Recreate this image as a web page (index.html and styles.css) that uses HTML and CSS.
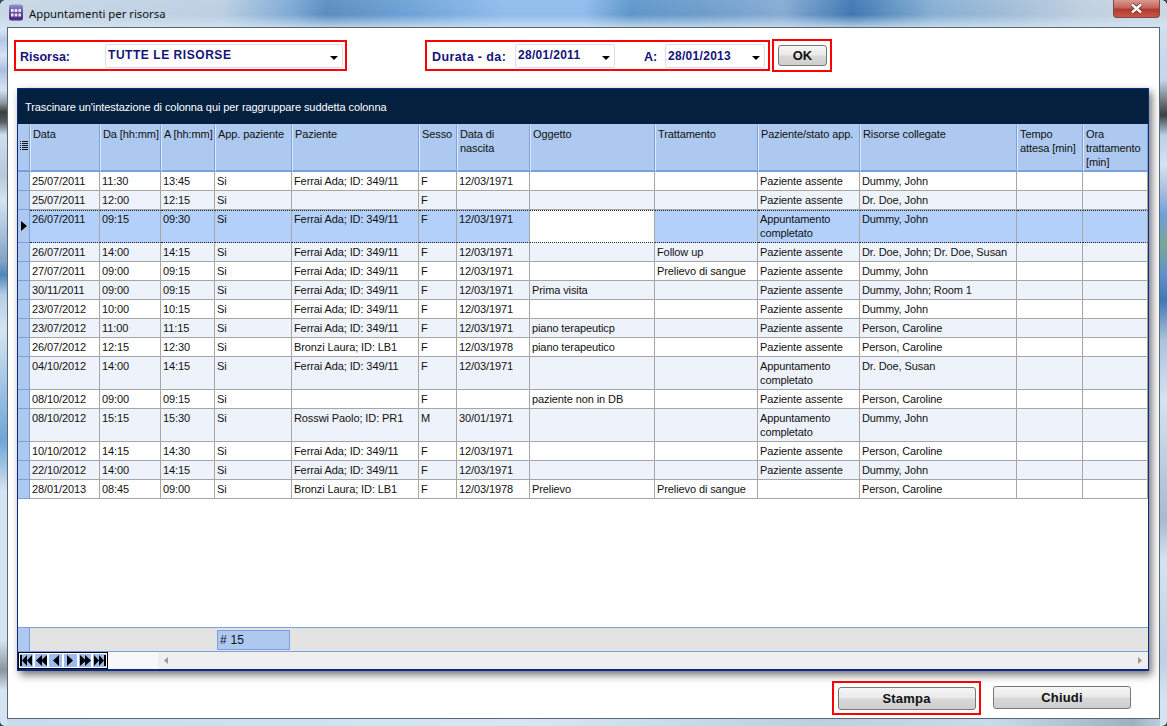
FILE: index.html
```html
<!DOCTYPE html>
<html lang="it">
<head>
<meta charset="utf-8">
<title>Appuntamenti per risorsa</title>
<link rel="stylesheet" href="styles.css">
</head>
<body>
<div class="window">
  <header class="titlebar">
    <svg class="appicon" width="16" height="17" viewBox="0 0 16 17"><defs><linearGradient id="ig" x1="0" y1="0" x2="0" y2="1"><stop offset="0" stop-color="#8f96cc"/><stop offset=".45" stop-color="#6a4f9e"/><stop offset="1" stop-color="#43277a"/></linearGradient></defs><rect x="1" y="0.5" width="14" height="16" rx="2.5" fill="url(#ig)"/><g fill="#e9e4f5"><rect x="3" y="5" width="2.6" height="3"/><rect x="6.7" y="5" width="2.6" height="3"/><rect x="10.4" y="5" width="2.6" height="3"/><rect x="3" y="9.5" width="2.6" height="3"/><rect x="6.7" y="9.5" width="2.6" height="3"/><rect x="10.4" y="9.5" width="2.6" height="3"/></g></svg>
    <span class="wintitle">Appuntamenti per risorsa</span>
    <div class="closebtn"><svg width="13" height="11" viewBox="0 0 13 11"><path d="M2 1.5 L11 9.5 M11 1.5 L2 9.5" stroke="#5a2a2a" stroke-width="4"/><path d="M2 1.5 L11 9.5 M11 1.5 L2 9.5" stroke="#fff" stroke-width="2.4"/></svg></div>
  </header>
  <main class="client">
    <div class="toolbar">
      <div class="redbox box-risorsa">
        <label class="lbl lbl-risorsa">Risorsa:</label>
        <div class="combo combo-wide"><span>TUTTE LE RISORSE</span><i class="caret"></i></div>
      </div>
      <div class="redbox box-durata">
        <label class="lbl lbl-da">Durata - da:</label>
        <div class="combo combo-date"><span>28/01/2011</span><i class="caret"></i></div>
        <label class="lbl lbl-a">A:</label>
        <div class="combo combo-date combo-low"><span>28/01/2013</span><i class="caret"></i></div>
      </div>
      <div class="redbox box-ok"><button class="btn btn-ok">OK</button></div>
    </div>
    <section class="grid">
      <div class="groupband">Trascinare un'intestazione di colonna qui per raggruppare suddetta colonna</div>
      <div class="tablewrap">
        <table class="data">
          <colgroup><col class="c0"><col class="c1"><col class="c2"><col class="c3"><col class="c4"><col class="c5"><col class="c6"><col class="c7"><col class="c8"><col class="c9"><col class="c10"><col class="c11"><col class="c12"><col class="c13"></colgroup>
          <thead>
            <tr><th class="sel-h"><svg width="8" height="9" viewBox="0 0 8 9"><path d="M0 0h1v1H0zM0 2h1v1H0zM0 4h1v1H0zM0 6h1v1H0zM0 8h1v1H0zM2 0h6v1H2zM2 2h6v1H2zM2 4h6v1H2zM2 6h6v1H2zM2 8h6v1H2z" fill="#111"/></svg></th><th>Data</th><th class="nowrap">Da [hh:mm]</th><th class="nowrap">A [hh:mm]</th><th class="nowrap">App. paziente</th><th>Paziente</th><th>Sesso</th><th>Data di nascita</th><th>Oggetto</th><th>Trattamento</th><th class="nowrap">Paziente/stato app.</th><th>Risorse collegate</th><th>Tempo attesa [min]</th><th>Ora trattamento [min]</th></tr>
          </thead>
          <tbody>
            <tr><th></th><td>25/07/2011</td><td>11:30</td><td>13:45</td><td>Si</td><td>Ferrai Ada; ID: 349/11</td><td>F</td><td>12/03/1971</td><td></td><td></td><td>Paziente assente</td><td>Dummy, John</td><td></td><td></td></tr>
            <tr class="alt"><th></th><td>25/07/2011</td><td>12:00</td><td>12:15</td><td>Si</td><td></td><td>F</td><td></td><td></td><td></td><td>Paziente assente</td><td>Dr. Doe, John</td><td></td><td></td></tr>
            <tr class="tall current"><th><svg width="6" height="10" viewBox="0 0 6 10"><path d="M0 0 L6 5 L0 10Z" fill="#000"/></svg></th><td>26/07/2011</td><td>09:15</td><td>09:30</td><td>Si</td><td>Ferrai Ada; ID: 349/11</td><td>F</td><td>12/03/1971</td><td class="editing"></td><td></td><td>Appuntamento completato</td><td>Dummy, John</td><td></td><td></td></tr>
            <tr class="alt"><th></th><td>26/07/2011</td><td>14:00</td><td>14:15</td><td>Si</td><td>Ferrai Ada; ID: 349/11</td><td>F</td><td>12/03/1971</td><td></td><td>Follow up</td><td>Paziente assente</td><td>Dr. Doe, John; Dr. Doe, Susan</td><td></td><td></td></tr>
            <tr><th></th><td>27/07/2011</td><td>09:00</td><td>09:15</td><td>Si</td><td>Ferrai Ada; ID: 349/11</td><td>F</td><td>12/03/1971</td><td></td><td>Prelievo di sangue</td><td>Paziente assente</td><td>Dummy, John</td><td></td><td></td></tr>
            <tr class="alt"><th></th><td>30/11/2011</td><td>09:00</td><td>09:15</td><td>Si</td><td>Ferrai Ada; ID: 349/11</td><td>F</td><td>12/03/1971</td><td>Prima visita</td><td></td><td>Paziente assente</td><td>Dummy, John; Room 1</td><td></td><td></td></tr>
            <tr><th></th><td>23/07/2012</td><td>10:00</td><td>10:15</td><td>Si</td><td>Ferrai Ada; ID: 349/11</td><td>F</td><td>12/03/1971</td><td></td><td></td><td>Paziente assente</td><td>Dummy, John</td><td></td><td></td></tr>
            <tr class="alt"><th></th><td>23/07/2012</td><td>11:00</td><td>11:15</td><td>Si</td><td>Ferrai Ada; ID: 349/11</td><td>F</td><td>12/03/1971</td><td>piano terapeuticp</td><td></td><td>Paziente assente</td><td>Person, Caroline</td><td></td><td></td></tr>
            <tr><th></th><td>26/07/2012</td><td>12:15</td><td>12:30</td><td>Si</td><td>Bronzi Laura; ID: LB1</td><td>F</td><td>12/03/1978</td><td>piano terapeutico</td><td></td><td>Paziente assente</td><td>Person, Caroline</td><td></td><td></td></tr>
            <tr class="alt tall"><th></th><td>04/10/2012</td><td>14:00</td><td>14:15</td><td>Si</td><td>Ferrai Ada; ID: 349/11</td><td>F</td><td>12/03/1971</td><td></td><td></td><td>Appuntamento completato</td><td>Dr. Doe, Susan</td><td></td><td></td></tr>
            <tr><th></th><td>08/10/2012</td><td>09:00</td><td>09:15</td><td>Si</td><td></td><td>F</td><td></td><td>paziente non in DB</td><td></td><td>Paziente assente</td><td>Person, Caroline</td><td></td><td></td></tr>
            <tr class="alt tall"><th></th><td>08/10/2012</td><td>15:15</td><td>15:30</td><td>Si</td><td>Rosswi Paolo; ID: PR1</td><td>M</td><td>30/01/1971</td><td></td><td></td><td>Appuntamento completato</td><td>Dummy, John</td><td></td><td></td></tr>
            <tr><th></th><td>10/10/2012</td><td>14:15</td><td>14:30</td><td>Si</td><td>Ferrai Ada; ID: 349/11</td><td>F</td><td>12/03/1971</td><td></td><td></td><td>Paziente assente</td><td>Person, Caroline</td><td></td><td></td></tr>
            <tr class="alt"><th></th><td>22/10/2012</td><td>14:00</td><td>14:15</td><td>Si</td><td>Ferrai Ada; ID: 349/11</td><td>F</td><td>12/03/1971</td><td></td><td></td><td>Paziente assente</td><td>Dummy, John</td><td></td><td></td></tr>
            <tr><th></th><td>28/01/2013</td><td>08:45</td><td>09:00</td><td>Si</td><td>Bronzi Laura; ID: LB1</td><td>F</td><td>12/03/1978</td><td>Prelievo</td><td>Prelievo di sangue</td><td></td><td>Person, Caroline</td><td></td><td></td></tr>
          </tbody>
        </table>
      </div>
      <div class="summary"><div class="sum-sel"></div><div class="sum-count"># 15</div></div>
      <div class="navbar">
        <div class="navbtns">
          <span class="nb"><svg width="12" height="11" viewBox="0 0 12 11"><path d="M0 0h2v11H0zM7 0v11L2 5.5zM12 0v11L7 5.5z"/></svg></span>
          <span class="nb"><svg width="11" height="11" viewBox="0 0 11 11"><path d="M6 0v11L0 5.5zM11 0v11L5 5.5z"/></svg></span>
          <span class="nb"><svg width="6" height="11" viewBox="0 0 6 11"><path d="M6 0v11L0 5.5z"/></svg></span>
          <span class="nb"><svg width="6" height="11" viewBox="0 0 6 11"><path d="M0 0v11L6 5.5z"/></svg></span>
          <span class="nb"><svg width="11" height="11" viewBox="0 0 11 11"><path d="M0 0v11L6 5.5zM5 0v11L11 5.5z"/></svg></span>
          <span class="nb"><svg width="12" height="11" viewBox="0 0 12 11"><path d="M0 0v11L5 5.5zM5 0v11L10 5.5zM10 0h2v11h-2z"/></svg></span>
        </div>
        <div class="hscroll">
          <svg width="4" height="7" viewBox="0 0 4 7"><path d="M4 0v7L0 3.5z" fill="#999"/></svg>
          <svg width="4" height="7" viewBox="0 0 4 7"><path d="M0 0v7L4 3.5z" fill="#999"/></svg>
        </div>
      </div>
    </section>
    <footer class="actions">
      <div class="redbox box-stampa"><button class="btn btn-big">Stampa</button></div>
      <button class="btn btn-big">Chiudi</button>
    </footer>
  </main>
</div>
</body>
</html>
```
FILE: styles.css
```css
* { box-sizing: border-box; }
html, body { margin: 0; padding: 0; height: 100%; overflow: hidden; }
body { font-family: "Liberation Sans", Arial, sans-serif; background: #39444f; }
.window {
  width: 1167px; height: 726px; display: flex; flex-direction: column;
  border-radius: 6px 6px 5px 5px;
  background-color: #cfe0f0;
  background-image:
    linear-gradient(180deg, #d5e4f2 0, #d5e4f2 30px, #b4c8e6 40px, #d5e4f2 55px, #aebfe2 70px, #d5e4f2 90px, #8f979f 103px, #3d3d3d 112px, #585d62 122px, #cfe0f0 135px, #b8c8d8 175px, #d5e4f2 200px, #7fa2c6 262px, #4e86bd 275px, #b5cfe6 295px, #d5e4f2 330px, #6fa5d8 440px, #a8c8e6 470px, #d5e4f2 490px, #d5e4f2 640px, #8c949c 670px, #d5e4f2 690px),
    linear-gradient(180deg, #d5e4f2 0, #c2d6ea 80px, #6a7176 103px, #3a3f44 115px, #b8d0e8 135px, #d5e4f2 165px, #a8c0e2 190px, #6f9fd8 215px, #78a898 245px, #5d92d0 275px, #3f78ba 300px, #a9c4de 340px, #d5e4f2 400px, #a6bbcf 520px, #d5e4f2 560px, #bcd2e4 660px, #d5e4f2 700px),
    linear-gradient(90deg, #c6dcee 0, #d7e6f3 45%, #bcd0e2 70%, #c9dbea 85%, #9fb0c0 97%, #c0d4e6 100%);
  background-size: 7px 100%, 7px 100%, 100% 100%;
  background-position: left top, right top, left top;
  background-repeat: no-repeat;
}
.titlebar {
  height: 27px; flex: none; display: flex; align-items: flex-start; padding-left: 8px; position: relative;
  border-radius: 6px 6px 0 0;
  background:
    linear-gradient(180deg, rgba(255,255,255,.05) 0, rgba(255,255,255,0) 55%, rgba(214,230,244,.75) 100%),
    linear-gradient(90deg, #c8d8e6 0, #bccfe2 19%, #7da9d5 25%, #5a8dc0 28%, #6ea2d6 35%, #8fbcec 43%, #8fbcec 50%, #5f97cb 54%, #6d9dcb 60%, #86acd4 67%, #3f78b2 73%, #86b0d4 80%, #a0bcd8 86%, #c0d0e0 93%, #cad8e4 100%);
}
.appicon { margin-top: 4px; }
.wintitle { font-family: "Noto Sans", sans-serif; font-size: 11.3px; line-height: 16px; margin: 6px 0 0 5px; color: #111; }
.closebtn {
  position: absolute; right: 7px; top: 0; width: 47px; height: 18px;
  border: 1px solid #7a4a48; border-top: 0; border-radius: 0 0 4px 4px;
  background: linear-gradient(#d99a90 0%, #c4645a 45%, #b03a2e 55%, #c9564a 100%);
  display: flex; align-items: center; justify-content: center;
}
.client {
  flex: none; width: 1153px; height: 692px; margin-left: 7px;
  background: #fff; border: 1px solid #5a6670;
  display: flex; flex-direction: column;
}
.toolbar { height: 60px; flex: none; display: flex; padding: 11px 0 0 6px; align-items: flex-start; }
.redbox { border: 2px solid #f00; display: flex; align-items: center; background: #fff; }
.box-risorsa { width: 333px; height: 31px; margin-top: 1px; padding-left: 4px; }
.box-durata { width: 345px; height: 31px; margin: 1px 0 0 78px; padding-left: 5px; }
.box-ok { width: 60px; height: 33px; margin-left: 2px; padding-left: 4px; }
.lbl { font-size: 12.5px; font-weight: bold; color: #14147a; line-height: 16px; padding-top: 2px; }
.lbl-risorsa { width: 85px; }
.lbl-da { width: 83px; letter-spacing: .4px; }
.lbl-a { width: 21px; margin-left: 29px; }
.combo {
  height: 24px; border: 1px solid #d9dfe8; border-radius: 2px; position: relative;
  font-size: 12px; font-weight: bold; color: #14147a; padding: 2px 0 0 2px; line-height: 16px;
}
.combo-wide { width: 238px; letter-spacing: .55px; }
.combo-date { width: 100px; letter-spacing: .3px; }
.combo-low { padding-top: 3px; }
.caret { position: absolute; right: 4px; top: 11px; width: 0; height: 0; border: 4px solid transparent; border-top: 4px solid #000; border-bottom: 0; }
.btn {
  font-family: "Liberation Sans", Arial, sans-serif; font-weight: bold; color: #111; padding: 0;
  border: 1px solid #777; border-radius: 3px;
  background: linear-gradient(#f6f6f6 0%, #e9e9e9 48%, #d8d8d8 52%, #cfcfcf 100%);
}
.btn-ok { width: 49px; height: 21px; font-size: 13px; }
.btn-big { width: 138px; height: 23px; font-size: 13px; letter-spacing: .2px; }
.grid {
  flex: none; width: 1132px; height: 583px; margin-left: 9px;
  border: 1px solid #0b2a8c; border-width: 1px 1px 2px 1px;
  box-shadow: 3px 4px 8px rgba(0,0,0,.55);
  display: flex; flex-direction: column; background: #fff;
}
.groupband { height: 35px; flex: none; background: #03213f; color: #fff; font-size: 11px; letter-spacing: -.08px; line-height: 37px; padding-left: 7px; }
.tablewrap { flex: 1 1 0; min-height: 0; overflow: hidden; }
.data { border-collapse: separate; border-spacing: 0; table-layout: fixed; width: 1130px; font-size: 11px; letter-spacing: -.1px; line-height: 14px; color: #111; }
.c0 { width: 12px; } .c1 { width: 70px; } .c2 { width: 61px; } .c3 { width: 54px; } .c4 { width: 77px; }
.c5 { width: 127px; } .c6 { width: 38px; } .c7 { width: 73px; } .c8 { width: 125px; } .c9 { width: 103px; }
.c10 { width: 102px; } .c11 { width: 157px; } .c12 { width: 66px; } .c13 { width: 65px; }
.data thead th {
  height: 48px; background: #adc9ef; font-weight: normal; text-align: left; vertical-align: top;
  padding: 1px 1px 0 2px; border-right: 1px solid #7e9fdb; border-left: 1px solid #dfe9f8;
  border-top: 2px solid #adc9ef; border-bottom: 2px solid #7e9fdb; overflow: hidden;
}
.data thead th.nowrap { white-space: nowrap; }
.data thead th.sel-h { padding: 15px 0 0 2px; border-left: 0; }
.sel-h svg { display: block; }
.data tbody th { background: #adc9ef; border-right: 1px solid #7e9fdb; border-bottom: 1px solid #7e9fdb; padding: 0 0 0 3px; vertical-align: middle; }
.data tbody th svg { display: block; }
.data td {
  height: 19px; padding: 2px 1px 0 2px; vertical-align: top; overflow: hidden;
  border-right: 1px solid #a6a6a6; border-bottom: 1px solid #a6a6a6; background: #fff;
}
.data tr.alt td { background: #eef2fa; }
.data tr.tall td { height: 33px; }
.data tr.current td { background: #b3d0fb; padding-top: 1px; border-top: 1px dotted #222; border-bottom: 1px dotted #222; }
.data tr.current td.editing { background: #fff; }
.summary { height: 25px; flex: none; background: #e3e3e3; border-top: 1px solid #7e9fdb; border-bottom: 1px solid #7e9fdb; display: flex; }
.sum-sel { width: 12px; background: #adc9ef; border-right: 1px solid #7e9fdb; }
.sum-count { width: 73px; height: 20px; margin: 2px 0 0 187px; background: #adc9ef; border: 1px solid #7e9fdb; font-size: 12px; letter-spacing: .2px; line-height: 18px; padding-left: 2px; color: #111; }
.navbar { height: 17px; flex: none; display: flex; background: #f0f0f0; }
.navbtns { width: 90px; flex: none; background: #fff; border: 1px solid #000; display: flex; gap: 2px; padding: 1px; }
.nb { width: 13px; height: 13px; background: #9cbcf0; display: flex; align-items: center; justify-content: center; }
.nb svg { fill: #000; display: block; }
.hscroll { flex: 1; display: flex; justify-content: space-between; align-items: center; padding: 0 6px 0 56px; background: linear-gradient(90deg, #f8f8f8 0 50px, #efefef 50px); }
.actions { flex: 1; display: flex; align-items: flex-start; padding: 10px 0 0 824px; }
.box-stampa { width: 149px; height: 34px; justify-content: center; margin-right: 12px; }
.actions > .btn { margin-top: 5px; }
```
